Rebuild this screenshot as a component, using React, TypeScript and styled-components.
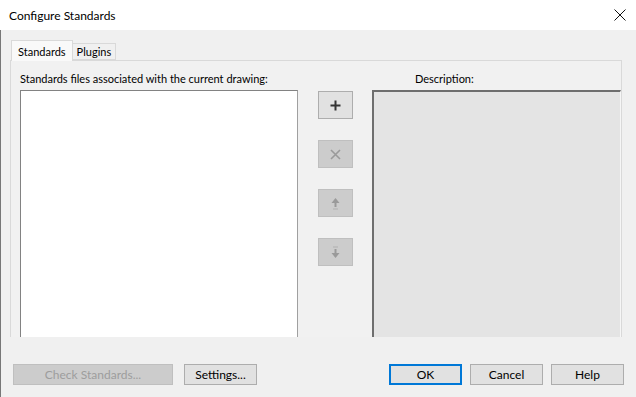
import React, { FC } from 'react';
import styled, { createGlobalStyle } from 'styled-components';

const GlobalStyle = createGlobalStyle`
  html, body {
    margin: 0;
    padding: 0;
    background: #f0f0f0;
  }
  body {
    font-family: Lato, "Noto Sans", sans-serif;
    font-size: 12px;
    color: #000;
  }
`;

const Window = styled.div`
  width: 636px;
  height: 397px;
  display: flex;
  flex-direction: column;
  overflow: hidden;
`;

const TitleBar = styled.div`
  height: 30px;
  flex-shrink: 0;
  background: #ffffff;
  display: flex;
  align-items: center;
  justify-content: space-between;
  padding: 0 9px 0 9px;
  font-size: 12px;
`;

const CloseButton = styled.div`
  width: 14px;
  height: 14px;
  display: flex;
  align-items: center;
  justify-content: center;
`;

const Body = styled.div`
  flex: 1;
  border-left: 1px solid #777777;
  padding: 10px 0 0 9px;
  display: flex;
  flex-direction: column;
`;

const TabStrip = styled.div`
  display: flex;
  align-items: flex-end;
  height: 20px;
  padding-left: 1px;
  font-size: 11px;
`;

const Tab = styled.div<{ $active?: boolean }>`
  height: ${(p) => (p.$active ? '21px' : '17px')};
  padding: 0 ${(p) => (p.$active ? '6px' : '4px')};
  box-sizing: border-box;
  border: 1px solid #d9d9d9;
  border-bottom: ${(p) => (p.$active ? 'none' : '1px solid #d9d9d9')};
  border-left: ${(p) => (p.$active ? '1px solid #d9d9d9' : 'none')};
  background: ${(p) => (p.$active ? '#f9f9f9' : '#f0f0f0')};
  display: flex;
  align-items: center;
  position: relative;
  z-index: ${(p) => (p.$active ? 1 : 0)};
  margin-bottom: ${(p) => (p.$active ? '-1px' : '0')};
`;

const TabPage = styled.div`
  width: 612px;
  height: 277px;
  box-sizing: border-box;
  border: 1px solid #d9d9d9;
  border-bottom: none;
  background: #f1f1f1;
  padding: 11px 0 0 9px;
  display: grid;
  grid-template-columns: 278px 35px 1fr;
  grid-template-rows: 18px 1fr;
  column-gap: 20px;
`;

const FieldLabel = styled.div<{ $indent?: number }>`
  padding-left: ${(p) => p.$indent || 0}px;
  line-height: 14px;
  font-size: 11px;
`;

const ListBox = styled.div`
  background: #ffffff;
  border: 1px solid #828282;
  border-bottom: none;
  border-right-color: #a0a0a0;
`;

const DescriptionBox = styled.div`
  margin-left: -1px;
  background: #e4e4e4;
  border-top: 2px solid #6e6e6e;
  border-left: 2px solid #6e6e6e;
  border-right: 1px solid #f6f6f6;
`;

const ToolColumn = styled.div`
  display: flex;
  flex-direction: column;
  gap: 21px;
  padding-top: 1px;
`;

const ToolButton = styled.div<{ $disabled?: boolean }>`
  width: 35px;
  height: 28px;
  box-sizing: border-box;
  border: 1px solid ${(p) => (p.$disabled ? '#bfbfbf' : '#adadad')};
  background: ${(p) => (p.$disabled ? '#cccccc' : '#e1e1e1')};
  display: flex;
  align-items: center;
  justify-content: center;
`;

const Footer = styled.div`
  display: flex;
  align-items: center;
  padding: 27px 0 0 3px;
`;

const DialogButton = styled.div<{ $width: number; $disabled?: boolean; $default?: boolean }>`
  width: ${(p) => p.$width}px;
  height: 21px;
  box-sizing: border-box;
  border: ${(p) =>
    p.$default ? '2px solid #0078d7' : `1px solid ${p.$disabled ? '#bfbfbf' : '#adadad'}`};
  background: ${(p) => (p.$disabled ? '#cccccc' : '#e1e1e1')};
  color: ${(p) => (p.$disabled ? '#9d9d9d' : '#000')};
  display: flex;
  align-items: center;
  justify-content: center;
`;

const Spacer = styled.div<{ $w: number }>`
  width: ${(p) => p.$w}px;
  flex-shrink: 0;
`;

const PlusIcon = () => (
  <svg width="11" height="11" viewBox="0 0 11 11">
    <path d="M5.5 0.5v10M0.5 5.5h10" stroke="#333" strokeWidth="2" />
  </svg>
);

const RemoveIcon = () => (
  <svg width="11" height="11" viewBox="0 0 11 11">
    <path d="M1 1l9 9M10 1l-9 9" stroke="#9a9a9a" strokeWidth="1.6" />
  </svg>
);

const UpIcon = () => (
  <svg width="11" height="13" viewBox="0 0 11 13">
    <path d="M5.5 1L1.5 6h8z" fill="#9a9a9a" />
    <path d="M5.5 5v5" stroke="#9a9a9a" strokeWidth="2" />
    <path d="M3 12h5" stroke="#b0b0b0" strokeWidth="1" />
  </svg>
);

const DownIcon = () => (
  <svg width="11" height="13" viewBox="0 0 11 13">
    <path d="M3 1h5" stroke="#b0b0b0" strokeWidth="1" />
    <path d="M5.5 3v5" stroke="#9a9a9a" strokeWidth="2" />
    <path d="M5.5 12L1.5 7h8z" fill="#9a9a9a" />
  </svg>
);

const App: FC = () => {
  return (
    <>
      <GlobalStyle />
      <Window>
        <TitleBar>
          <span>Configure Standards</span>
          <CloseButton>
            <svg width="12" height="12" viewBox="0 0 12 12">
              <path d="M0.5 0.5l11 11M11.5 0.5l-11 11" stroke="#111" strokeWidth="1" />
            </svg>
          </CloseButton>
        </TitleBar>
        <Body>
          <TabStrip>
            <Tab $active>Standards</Tab>
            <Tab>Plugins</Tab>
          </TabStrip>
          <TabPage>
            <FieldLabel>Standards files associated with the current drawing:</FieldLabel>
            <div />
            <FieldLabel $indent={42}>Description:</FieldLabel>
            <ListBox />
            <ToolColumn>
              <ToolButton><PlusIcon /></ToolButton>
              <ToolButton $disabled><RemoveIcon /></ToolButton>
              <ToolButton $disabled><UpIcon /></ToolButton>
              <ToolButton $disabled><DownIcon /></ToolButton>
            </ToolColumn>
            <DescriptionBox />
          </TabPage>
          <Footer>
            <DialogButton $width={160} $disabled>Check Standards...</DialogButton>
            <Spacer $w={11} />
            <DialogButton $width={73}>Settings...</DialogButton>
            <Spacer $w={132} />
            <DialogButton $width={73} $default>OK</DialogButton>
            <Spacer $w={8} />
            <DialogButton $width={73}>Cancel</DialogButton>
            <Spacer $w={8} />
            <DialogButton $width={73}>Help</DialogButton>
          </Footer>
        </Body>
      </Window>
    </>
  );
};

export default App;
